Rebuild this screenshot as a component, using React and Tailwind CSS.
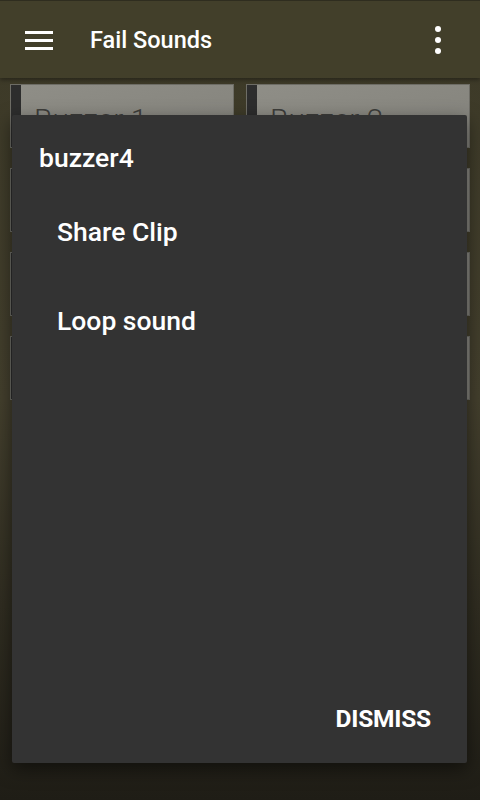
import React from 'react';

const sounds = ['Buzzer 1', 'Buzzer 2', 'Buzzer 3', 'Buzzer 4', 'Buzzer 5', 'Buzzer 6', 'Buzzer 7', 'Buzzer 8'];

export default function App() {
  return (
    <div
      className="relative w-[480px] h-[800px] overflow-hidden bg-gradient-to-b from-[#3c3927] via-[#433f2d] to-[#1f1d16]"
      style={{ fontFamily: 'Roboto, "Noto Sans", sans-serif' }}
    >
      {/* Toolbar */}
      <header className="h-[78px] bg-[#423f2a] border-t border-[#2f2d1f] shadow-[0_2px_4px_rgba(0,0,0,0.35)] flex items-center px-[25px] relative z-10">
        <svg width="28" height="20" viewBox="0 0 28 20" className="shrink-0">
          <rect x="0" y="1" width="28" height="3" fill="#fff" />
          <rect x="0" y="9" width="28" height="3" fill="#fff" />
          <rect x="0" y="17" width="28" height="3" fill="#fff" />
        </svg>
        <h1 className="ml-[37px] mt-[2px] text-[23.5px] font-medium text-white">Fail Sounds</h1>
        <div className="ml-auto mr-[14px] flex flex-col gap-[5px]">
          <span className="w-[6px] h-[6px] rounded-full bg-white" />
          <span className="w-[6px] h-[6px] rounded-full bg-white" />
          <span className="w-[6px] h-[6px] rounded-full bg-white" />
        </div>
      </header>

      {/* Sound grid (mostly covered by the dialog) */}
      <main className="grid grid-cols-2 gap-x-[12px] gap-y-[20px] px-[10px] pt-[6px]">
        {sounds.map((s) => (
          <div
            key={s}
            className="h-[64px] flex border border-[#6e6d66] bg-gradient-to-br from-[#8f8e87] to-[#83827b]"
          >
            <div className="w-[10px] bg-[#2d2d2d]" />
            <div className="pl-[13px] pt-[20px] text-[30px] font-light text-[#3d3d3a] leading-none">{s}</div>
          </div>
        ))}
      </main>

      {/* Dialog */}
      <div className="absolute left-[12px] top-[115px] w-[455px] h-[648px] bg-[#333333] rounded-[2px] shadow-[0_6px_18px_rgba(0,0,0,0.5)] flex flex-col text-white">
        <div className="pl-[27px] pt-[28px] text-[26.5px] font-medium leading-[30px]">buzzer4</div>
        <div className="pl-[45px] mt-[44px] text-[26.5px] font-medium leading-[30px]">Share Clip</div>
        <div className="pl-[45px] mt-[59px] text-[26.5px] font-medium leading-[30px]">Loop sound</div>
        <div className="mt-auto flex justify-end pr-[36px] pb-[29px]">
          <span className="text-[24.5px] font-bold leading-[30px] tracking-[-0.2px]">DISMISS</span>
        </div>
      </div>
    </div>
  );
}
